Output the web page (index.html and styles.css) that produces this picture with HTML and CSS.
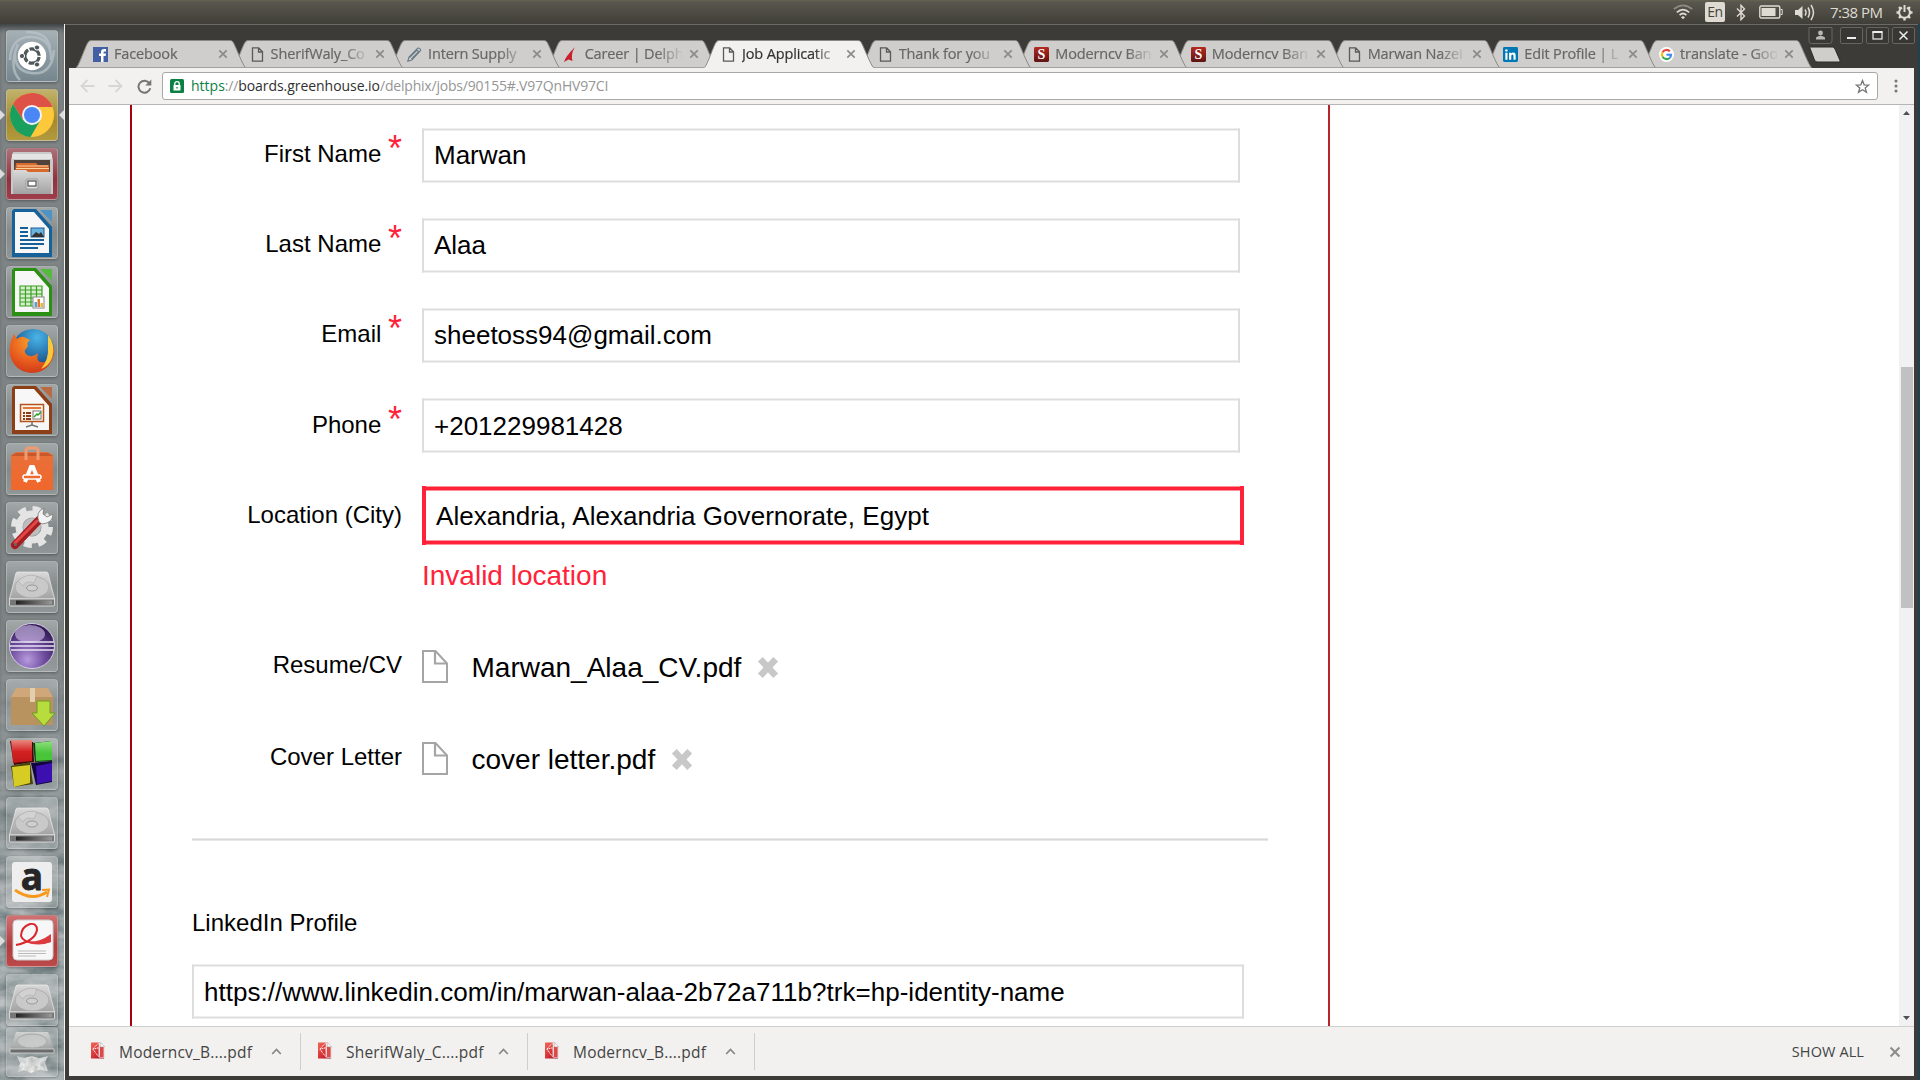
FILE: index.html
```html
<!DOCTYPE html>
<html lang="en">
<head>
<meta charset="utf-8">
<title>Job Application</title>
<link rel="stylesheet" href="styles.css">
</head>
<body>
<svg class="defs" width="0" height="0">
  <defs>
    <linearGradient id="metal" x1="0" y1="0" x2="0" y2="1"><stop offset="0" stop-color="#d9d9d9"/><stop offset="1" stop-color="#a2a2a2"/></linearGradient>
    <linearGradient id="shadeR" x1="0" y1="0" x2="0" y2="1"><stop offset="0" stop-color="#b52a22"/><stop offset="1" stop-color="#5e1412"/></linearGradient>
    <linearGradient id="dark" x1="0" y1="0" x2="1" y2="0"><stop offset="0" stop-color="#222"/><stop offset="1" stop-color="#999"/></linearGradient>
    <linearGradient id="orange" x1="0" y1="0" x2="0" y2="1"><stop offset="0" stop-color="#e8703a"/><stop offset="1" stop-color="#f0672b"/></linearGradient>
    <linearGradient id="cubeR" x1="0" y1="0" x2="0" y2="1"><stop offset="0" stop-color="#e88a80"/><stop offset=".5" stop-color="#d42222"/><stop offset="1" stop-color="#c01818"/></linearGradient>
    <linearGradient id="cubeG" x1="0" y1="0" x2="0" y2="1"><stop offset="0" stop-color="#8fe080"/><stop offset=".6" stop-color="#4ac53a"/></linearGradient>
    <radialGradient id="purple" cx=".4" cy=".8" r=".8"><stop offset="0" stop-color="#b79ade"/><stop offset=".5" stop-color="#6c4a9b"/><stop offset="1" stop-color="#2d1850"/></radialGradient>
    <radialGradient id="fox" cx=".5" cy=".2" r=".9"><stop offset="0" stop-color="#f7a12c"/><stop offset=".6" stop-color="#e6581d"/><stop offset="1" stop-color="#c73118"/></radialGradient>
    <radialGradient id="globe" cx=".6" cy=".2" r=".8"><stop offset="0" stop-color="#49b5e8"/><stop offset="1" stop-color="#0e3a78"/></radialGradient>
    <linearGradient id="pdfred" x1="0" y1="0" x2="1" y2="1"><stop offset="0" stop-color="#ef6a58"/><stop offset=".6" stop-color="#d42b33"/><stop offset="1" stop-color="#7c1033"/></linearGradient>
    <filter id="water" x="0" y="0" width="100%" height="100%">
      <feTurbulence type="fractalNoise" baseFrequency=".03 .07" numOctaves="4" seed="8"/>
      <feColorMatrix values=".8 0 0 0 -.03  .75 0 0 0 .04  .75 0 0 0 .05  0 0 0 0 1"/>
    </filter>
    <filter id="foam" x="0" y="0" width="100%" height="100%">
      <feTurbulence type="fractalNoise" baseFrequency=".25" numOctaves="2" seed="3" result="n"/>
      <feColorMatrix in="n" values=".8 0 0 0 .4  .8 0 0 0 .4  .8 0 0 0 .38  0 0 0 0 .85"/>
      <feComposite in2="SourceGraphic" operator="in"/>
    </filter>
    <symbol id="page" viewBox="0 0 12 15"><path d="M1 .8h6.2L11 4.8v9.4H1z M7 .8v4.2h4" fill="none" stroke="#5a5a5a" stroke-width="1.3"/></symbol>
    <symbol id="sicon" viewBox="0 0 16 16"><rect width="16" height="16" rx="1.5" fill="url(#shadeR)"/><text x="8" y="13.2" text-anchor="middle" font-family="Liberation Serif,serif" font-weight="bold" font-size="15" fill="#fff">S</text></symbol>
    <symbol id="x" viewBox="0 0 10 10"><path d="M1.3 1.3l7.4 7.4M8.7 1.3L1.3 8.7" stroke="#8b8b8b" stroke-width="1.7"/></symbol>
    <symbol id="tab" viewBox="0 0 170 28" preserveAspectRatio="none"><path d="M0 28C3 26 10 4 12.500 1.800Q13.500 .5 15.500 .5H154Q156 .5 157 2C160 7 167 26 170 28z"/><path class="edge" d="M.5 27.500C3.500 25 10 4 12.500 1.800Q13.500 .5 15.500 .5H154Q156 .5 157 2C160 7 166.500 25 169.500 27.500" fill="none"/></symbol>
    <symbol id="hdd" viewBox="0 0 52 52">
      <path d="M10 12Q10.500 11 12 11H40Q41.500 11 42 12L48.500 38H3.500z" fill="url(#metal)" stroke="#eee" stroke-width=".7"/>
      <ellipse cx="26" cy="26" rx="17" ry="11" fill="#c9c9c9" stroke="#a6a6a6" stroke-width=".8"/>
      <path d="M12 20Q20 12 31 15L28 22Q20 19 17 25Z" fill="#d2d2d2" stroke="#aaa" stroke-width=".6"/>
      <ellipse cx="26" cy="27" rx="5.500" ry="3" fill="#cfcfcf" stroke="#999"/>
      <path d="M3.500 38H48.500V44Q48.500 45 47 45H5Q3.500 45 3.500 44z" fill="#777" stroke="#e8e8e8" stroke-width=".8"/><path d="M10 39.500H46V43.500H10z" fill="url(#dark)"/>
    </symbol>
    <symbol id="pdf" viewBox="0 0 15 17"><path d="M0 0h10l4 4v13H0z" fill="url(#pdfred)"/><path d="M8 0h3l3.500 4v12.500H9z" fill="#e9dfdf"/><path d="M9.500 4.500h4V16h-4z" fill="#d94a49"/><path d="M7.500 1L2 7l6 8M2 7L8.500 5.500V15" fill="none" stroke="#fff" stroke-width="1" stroke-dasharray="1.500 .6"/><path d="M10.500 0L14.500 4.500h-4z" fill="#fff" stroke="#aaa" stroke-width=".5"/></symbol>
    <symbol id="chev" viewBox="0 0 11 7"><path d="M1.200 6L5.500 1.500 9.800 6" fill="none" stroke="#868686" stroke-width="1.700"/></symbol>
    <symbol id="file" viewBox="0 0 26 33"><path d="M1 1h12.500L25 13.500V32H1z" fill="#fff" stroke="#a5a5a5" stroke-width="2"/><path d="M13 1v12.500H25" fill="none" stroke="#a5a5a5" stroke-width="2.200"/></symbol>
    <symbol id="remove" viewBox="0 0 22 23"><path d="M3.300 3.300L18.700 19.700M18.700 3.300L3.300 19.700" stroke="#c8c8c8" stroke-width="6.600"/></symbol>
  </defs>
</svg>

<header class="panel">
  <svg class="wifi" width="20" height="16" viewBox="0 0 20 16" fill="none" stroke-width="1.700"><path d="M.8 5.200Q10-2.500 19.200 5.200" stroke="#8d8a82"/><path d="M3.800 8.300Q10 2.800 16.200 8.300M6.600 11Q10 8 13.400 11" stroke="#dfdbd2"/><path d="M8 13.200Q10 11.400 12 13.200L10 15.300z" fill="#dfdbd2"/></svg>
  <span class="lang">En</span>
  <svg class="bt" width="10" height="17" viewBox="0 0 10 17"><path d="M1 4.500L8.500 12 5 15.700V1.300L8.500 5 1 12.500" fill="none" stroke="#dfdbd2" stroke-width="1.400"/></svg>
  <svg class="batt" width="24" height="14" viewBox="0 0 24 14"><rect x=".8" y="1" width="20" height="12" rx="1.500" fill="none" stroke="#dfdbd2" stroke-width="1.400"/><path d="M2.500 3h14v8h-14z" fill="#dfdbd2"/><path d="M21.500 4.500h1.700v5h-1.700" fill="none" stroke="#dfdbd2"/></svg>
  <svg class="vol" width="21" height="17" viewBox="0 0 21 17"><path d="M0 6h3l4.500-4v13L3 11H0z" fill="#dfdbd2"/><path d="M10 5.500Q12 8.500 10 11.500M13 3.500Q16 8.500 13 13.500M16 1Q21 8.500 16 16" fill="none" stroke="#dfdbd2" stroke-width="1.500"/></svg>
  <span class="clock">7:38 PM</span>
  <svg class="gear" width="17" height="17" viewBox="0 0 17 17"><g fill="none" stroke="#dfdbd2"><path d="M6 3.600A5.400 5.400 0 1 0 11 3.600" stroke-width="2"/><path d="M8.500 1v7" stroke-width="2"/><path d="M3 3l1.800 1.800M14 3l-1.800 1.800M.5 8.500h2.500M14 8.500h2.500M3 14l1.800-1.800M14 14l-1.800-1.800M8.500 14v2.500" stroke-width="2.400"/></g></svg>
</header>

<div class="desktop">
<nav class="launcher">
  <svg class="sea" width="65" height="1056"><rect width="65" height="1056" filter="url(#water)"/></svg>
  <div class="tile dash"><svg viewBox="0 0 52 52"><path d="M4 30Q5 6 26 7Q46 8 45 30M48 20Q46 46 25 43Q8 41 9 22M14 50Q2 38 12 14M20 2Q42 2 44 18" fill="none" stroke="#b9c5ca" stroke-width="2.500" opacity=".7"/><circle cx="26" cy="26" r="14.200" fill="#fff"/><circle cx="26" cy="26" r="7.200" fill="none" stroke="#4e5759" stroke-width="3.200" stroke-dasharray="13.500 1.600" stroke-dashoffset="-1"/><g fill="#4e5759" stroke="#fff" stroke-width="1"><circle cx="16" cy="26" r="2.600"/><circle cx="31" cy="17.500" r="2.600"/><circle cx="31" cy="34.500" r="2.600"/></g></svg></div>
  <div class="tile chrome run focus"><svg viewBox="0 0 52 52"><circle cx="26" cy="26" r="22" fill="#fdc93a"/><path d="M7 15A22 22 0 0 1 46.500 18H26L17 31z" fill="#de5147"/><path d="M7 15A22 22 0 0 0 24.500 48L34.500 31 26 36 17 31z" fill="#19a05f"/><circle cx="26" cy="26" r="10" fill="#f3f3f3"/><circle cx="26" cy="26" r="8" fill="#4a86f5"/></svg></div>
  <div class="tile files run"><svg viewBox="0 0 52 52"><path d="M7 4H45L47 12V46H5V12z" fill="#c9c9c9"/><path d="M6 6H46V11H6z" fill="#e3e3e3"/><path d="M8 12H44V24H8z" fill="#51423b"/><path d="M10 15H30L32 17H43V24H9z" fill="#d86a2f"/><path d="M11 18H42M10 20.500H43" stroke="#f9d49c" stroke-width="1.200"/><path d="M7 22H20L22 24H45V46H7z" fill="url(#metal)"/><rect x="20" y="31" width="12" height="10" rx="2" fill="#dedede" stroke="#999"/><rect x="22" y="33" width="8" height="5" fill="#fff" stroke="#333"/></svg></div>
  <div class="tile"><svg viewBox="0 0 52 52"><path d="M8 2H30L46 20V50H6V4z" fill="#17619b"/><path d="M9 5H28L43 22V46H9z" fill="#f7f7f7"/><path d="M34 3H46V15z" fill="#4e93c4"/><path d="M14 21h8M14 25h8M14 29h8M14 33h24M14 37h24M14 41h18" stroke="#175f98" stroke-width="1.800"/><rect x="25" y="21" width="13" height="9" fill="#69b3de" stroke="#175f98"/><path d="M25 30l5-5 3 2 2-2 3 5" fill="#333"/></svg></div>
  <div class="tile"><svg viewBox="0 0 52 52"><path d="M8 2H30L46 20V50H6V4z" fill="#2b8f13"/><path d="M9 5H28L43 22V46H9z" fill="#f7f7f7"/><path d="M34 3H46V15z" fill="#56b83f"/><path d="M14 20h22v20H14z" fill="#d7efcf"/><path d="M14 20h22v20H14zM14 24h22M14 28h22M14 32h22M14 36h22M19.500 20v20M25 20v20M30.500 20v20" fill="none" stroke="#3ba022" stroke-width="1.200"/><rect x="27" y="31" width="11" height="11" fill="#fff" stroke="#888"/><path d="M28.500 36h2.500v5h-2.500z" fill="#4aa4e0"/><path d="M31.500 33h2.500v8h-2.500z" fill="#e5762b"/><path d="M34.500 37h2.500v4h-2.500z" fill="#edb62d"/></svg></div>
  <div class="tile"><svg viewBox="0 0 52 52"><circle cx="27" cy="25" r="21" fill="url(#globe)"/><path d="M5 16L8 9 11 14Q14 11 18 12L24 15Q20 18 22 21L20 24Q17 26 21 30Q27 33 32 28Q29 39 39 37Q46 30 44 14Q51 25 46 35Q40 48 25 48Q8 46 4 30Q3 22 5 16z" fill="url(#fox)"/><path d="M42 10Q50 20 46 33Q43 41 35 44Q43 34 42 22z" fill="#f9c83b"/></svg></div>
  <div class="tile"><svg viewBox="0 0 52 52"><path d="M8 2H30L46 20V50H6V4z" fill="#8c3e16"/><path d="M9 5H28L43 22V46H9z" fill="#f7f7f7"/><path d="M34 3H46V15z" fill="#b86b44"/><rect x="14.500" y="20.500" width="23" height="17" fill="#fdf3ea" stroke="#b3541d" stroke-width="1.500"/><path d="M17 24h18" stroke="#e07a3a" stroke-width="2"/><path d="M17 29h8M17 32h8M17 35h8" stroke="#8c3e16" stroke-width="1.800" stroke-dasharray="2 1 5"/><rect x="27" y="27" width="8" height="8" fill="#fff" stroke="#777"/><path d="M28 33l3-3 1 1 3-3" fill="none" stroke="#2ca02c" stroke-width="1.500"/><path d="M26 38v3l-6 2M26 41l6 2" stroke="#777" stroke-width="1.600" fill="none"/></svg></div>
  <div class="tile"><svg viewBox="0 0 52 52"><path d="M5 12L10 9H42L47 12V47H5z" fill="url(#orange)"/><path d="M5 13L10 10H42L47 13z" fill="#c65a2d"/><path d="M20 17V8Q20 5 23 5H29Q32 5 32 8V17" fill="none" stroke="#f09a70" stroke-width="3"/><path d="M19 39L25 24H27L33 39" fill="none" stroke="#fff" stroke-width="4"/><rect x="17" y="32" width="18" height="4" rx="2" fill="#ee6a30" stroke="#fff" stroke-width="1.500"/></svg></div>
  <div class="tile"><svg viewBox="0 0 52 52"><circle cx="26" cy="25" r="18.500" fill="none" stroke="#e4e4e4" stroke-width="5" stroke-dasharray="8 6.530"/><circle cx="26" cy="25" r="13" fill="none" stroke="#e4e4e4" stroke-width="7"/><circle cx="26" cy="25" r="9" fill="#bdbdbd"/><path d="M9 43L33 18" stroke="#a51d20" stroke-width="8" stroke-linecap="round"/><path d="M9 41L31 19" stroke="#e04848" stroke-width="3" stroke-linecap="round"/><path d="M33 20Q29 10 38 6L37 12 41 15 47 12Q47 21 36 22z" fill="#f3f3f3" stroke="#777" stroke-width=".8"/><circle cx="9.500" cy="42.500" r="1.500" fill="#666"/></svg></div>
  <div class="tile"><svg><use href="#hdd"/></svg></div>
  <div class="tile"><svg viewBox="0 0 52 52"><circle cx="26" cy="26" r="22.500" fill="url(#purple)" stroke="#d8cbe8"/><ellipse cx="24" cy="14" rx="15" ry="9" fill="#c9b8e2" opacity=".65"/><path d="M5 22H48M4 26H48M5 30H48" stroke="#e9e2f3" stroke-width="1.400"/></svg></div>
  <div class="tile"><svg viewBox="0 0 52 52"><path d="M10 9H42L47 18H5z" fill="#d0a778"/><path d="M5 18H47V46H5z" fill="#b8925f"/><path d="M24 9h5v14h-5z" fill="#e3cfae"/><path d="M31 22H44V34H49L38 47 26 34H31z" fill="#b7dc3d" stroke="#6f9f1e"/></svg></div>
  <div class="tile"><svg viewBox="0 0 52 52"><path d="M4 3L27 4 28 24 8 27z" fill="#400808"/><path d="M27 5L46 3 46 23 29 24z" fill="#0e3d0a"/><path d="M5 28L24 24 27 46 8 49z" fill="#4a460a"/><path d="M25 25L46 23V44L30 47z" fill="#12043c"/><path d="M5 2H26V23L7 25z" fill="url(#cubeR)"/><path d="M29 5L46 3V22L30 23z" fill="url(#cubeG)"/><path d="M6 29L24 27V45L8 49z" fill="#d6cc23"/><path d="M30 28L46 25V43L31 46z" fill="#3b0fb0"/></svg></div>
  <div class="tile"><svg><use href="#hdd"/></svg></div>
  <div class="tile"><svg viewBox="0 0 52 52"><rect x="6" y="6" width="40" height="40" rx="3" fill="#eee"/><text x="26" y="33.500" text-anchor="middle" font-family="Open Sans,sans-serif" font-weight="bold" font-size="37" fill="#262626" stroke="#262626" stroke-width=".8">a</text><path d="M9 34Q26 46 41 36" fill="none" stroke="#f79a1c" stroke-width="2.800"/><path d="M36 34L43 33.500 41 41" fill="none" stroke="#f79a1c" stroke-width="2"/></svg></div>
  <div class="tile reader run"><svg viewBox="0 0 52 52"><rect x="7" y="5" width="40" height="40" rx="4" fill="#f7f7f7" stroke="#ccc"/><path d="M10 30Q29 26 31 15Q31 8 24 9Q15 12 15 21Q18 31 45 26" fill="none" stroke="#d8262c" stroke-width="2"/><path d="M20 27Q33 28 45 19V27Q32 32 20 27" fill="#dc3a3e"/><path d="M12 36h28M12 38.500h28M12 41h18" stroke="#bbb"/></svg></div>
  <div class="tile"><svg><use href="#hdd"/></svg></div>
  <div class="tile folded"><svg viewBox="0 0 52 50"><path d="M10 5H42L48 22H4z" fill="url(#metal)"/><ellipse cx="26" cy="14" rx="15" ry="7" fill="#ccc" stroke="#aaa"/><path d="M4 22H48V26H4z" fill="#666" stroke="#ddd" stroke-width=".8"/><path d="M11 29L18 31 26 29 33 31 42 29 39 36 42 44 33 43 25 46 18 43 12 45 14 36z" fill="#fff" filter="url(#foam)"/></svg></div>
</nav>

<main class="window">
  <div class="titlebar">
    <div class="tabs">
      <div class="tab"><svg class="shape"><use href="#tab"/></svg><svg class="fav" viewBox="0 0 15 15"><rect width="15" height="15" fill="#4460a5"/><path d="M8 15V9H6V6.500H8V5Q8 2 11 2H13V4.500H11.500Q10.500 4.500 10.500 5.500V6.500H13L12.600 9H10.500V15z" fill="#fff"/></svg><span>Facebook</span><svg class="close"><use href="#x"/></svg></div>
      <div class="tab"><svg class="shape"><use href="#tab"/></svg><svg class="fav"><use href="#page"/></svg><span>SherifWaly_Co</span><svg class="close"><use href="#x"/></svg></div>
      <div class="tab"><svg class="shape"><use href="#tab"/></svg><svg class="fav" viewBox="0 0 15 15"><path d="M.8 14.200L2 10 10.500 1.300Q11.500.5 12.800 1.700 14.200 3 13.300 4L4.800 12.900zM2.500 10.500L9.500 3.500M4.500 12L11.500 5M9.300 2.500l3.200 3" fill="none" stroke="#667a86" stroke-width="1.100"/></svg><span>Intern Supply</span><svg class="close"><use href="#x"/></svg></div>
      <div class="tab"><svg class="shape"><use href="#tab"/></svg><svg class="fav" viewBox="0 0 15 15"><path d="M11 0Q6.500 7 8.500 14L4.500 12.500 0 15Q1.500 9.500 11 0z" fill="#c8202c"/></svg><span>Career | Delph</span><svg class="close"><use href="#x"/></svg></div>
      <div class="tab active"><svg class="shape"><use href="#tab"/></svg><svg class="fav"><use href="#page"/></svg><span>Job Applicatic</span><svg class="close"><use href="#x"/></svg></div>
      <div class="tab"><svg class="shape"><use href="#tab"/></svg><svg class="fav"><use href="#page"/></svg><span>Thank for you</span><svg class="close"><use href="#x"/></svg></div>
      <div class="tab"><svg class="shape"><use href="#tab"/></svg><svg class="fav"><use href="#sicon"/></svg><span>Moderncv Ban</span><svg class="close"><use href="#x"/></svg></div>
      <div class="tab"><svg class="shape"><use href="#tab"/></svg><svg class="fav"><use href="#sicon"/></svg><span>Moderncv Ban</span><svg class="close"><use href="#x"/></svg></div>
      <div class="tab"><svg class="shape"><use href="#tab"/></svg><svg class="fav"><use href="#page"/></svg><span>Marwan Nazei</span><svg class="close"><use href="#x"/></svg></div>
      <div class="tab"><svg class="shape"><use href="#tab"/></svg><svg class="fav" viewBox="0 0 16 16"><rect width="16" height="16" rx="1.500" fill="#0077b5"/><path d="M2.500 6h2.300v7.500H2.500zM6.500 6h2.200v1Q9.500 5.800 11 5.800 13.500 5.800 13.500 9v4.500h-2.300V9.500Q11.200 7.900 10 7.900 8.800 7.900 8.800 9.500v4H6.500z" fill="#fff"/><circle cx="3.600" cy="3.600" r="1.300" fill="#fff"/></svg><span>Edit Profile | L</span><svg class="close"><use href="#x"/></svg></div>
      <div class="tab"><svg class="shape"><use href="#tab"/></svg><svg class="fav" viewBox="0 0 16 16"><circle cx="8" cy="8" r="8" fill="#fff"/><g fill="none" stroke-width="2.200"><path d="M3.800 5.500A4.900 4.900 0 0 1 11.600 4.600" stroke="#ea4335"/><path d="M3.800 5.500A4.900 4.900 0 0 0 3.800 10.500" stroke="#fbbc05"/><path d="M3.800 10.500A4.900 4.900 0 0 0 11.400 11.600" stroke="#34a853"/><path d="M8 8.200H12.900Q12.800 10.300 11.400 11.600" stroke="#4285f4"/></g></svg><span>translate - Goo</span><svg class="close"><use href="#x"/></svg></div>
    </div>
    <svg class="newtab" width="34" height="17" viewBox="0 0 34 17"><path d="M1.500 1H24.500Q26 1 27 3L32 14.500Q32.300 16 31 16H9Q7.500 16 6.500 14z" fill="#d0cecb" stroke="#2d2c29" stroke-width="1"/></svg>
    <div class="controls">
      <svg class="user" viewBox="0 0 24 17"><path d="M.5 .5H23.500V14Q23.500 16.500 21 16.500H3Q.5 16.500 .5 14z" fill="#3a3935" stroke="#6b6963"/><circle cx="12" cy="6" r="2.400" fill="#bab8b3"/><path d="M7.500 12.500V10.500Q12 7 16.500 10.500V12.500z" fill="#bab8b3"/></svg>
      <svg viewBox="0 0 23 17"><rect x=".5" y=".5" width="22" height="16" rx="1.500" fill="#383733" stroke="#66645e"/><path d="M7 11h9" stroke="#eee" stroke-width="2"/></svg>
      <svg viewBox="0 0 23 17"><rect x=".5" y=".5" width="22" height="16" rx="1.500" fill="#383733" stroke="#66645e"/><rect x="7" y="5" width="9" height="7" fill="none" stroke="#eee" stroke-width="1.200"/><path d="M6.500 5h10" stroke="#eee" stroke-width="2"/></svg>
      <svg viewBox="0 0 23 17"><rect x=".5" y=".5" width="22" height="16" rx="1.500" fill="#383733" stroke="#66645e"/><path d="M7.500 4.500l8 8M15.500 4.500l-8 8" stroke="#eee" stroke-width="1.500"/></svg>
    </div>
  </div>

  <div class="toolbar">
    <svg class="arrow" viewBox="0 0 15 14"><path d="M14.500 7H1.500M7.500 1L1.500 7l6 6" fill="none" stroke="#d8d6d3" stroke-width="1.800"/></svg>
    <svg class="arrow" viewBox="0 0 15 14"><path d="M.5 7H13.500M7.500 1L13.500 7l-6 6" fill="none" stroke="#d8d6d3" stroke-width="1.800"/></svg>
    <svg class="reload" viewBox="0 0 15 15"><path d="M12.500 4.300A6 6 0 1 0 13.300 9.300" fill="none" stroke="#757575" stroke-width="2"/><path d="M14.300 .5V6.500H8.300z" fill="#757575"/></svg>
    <div class="omnibox">
      <svg class="lock" viewBox="0 0 14 14"><rect width="14" height="14" rx="1.500" fill="#0b8043"/><rect x="3.500" y="6" width="7" height="5.500" fill="#fff"/><path d="M4.800 6V4.500Q4.800 2.700 7 2.700T9.200 4.500V6" fill="none" stroke="#fff" stroke-width="1.300"/><path d="M6.400 8h1.300v1.600H6.400z" fill="#0b8043"/></svg>
      <span class="url"><b>https</b>://<i>boards.greenhouse.io</i>/delphix/jobs/90155#.V97QnHV97CI</span>
      <svg class="star" viewBox="0 0 15 15"><path d="M7.500 1.500L9.200 5.800 13.800 6 10.200 8.900 11.500 13.300 7.500 10.800 3.500 13.300 4.800 8.900 1.200 6 5.800 5.800z" fill="none" stroke="#757575" stroke-width="1.300"/></svg>
    </div>
    <svg class="dots" viewBox="0 0 4 14"><g fill="#757575"><circle cx="2" cy="2" r="1.500"/><circle cx="2" cy="7" r="1.500"/><circle cx="2" cy="12" r="1.500"/></g></svg>
  </div>

  <div class="viewport">
    <section class="page">
      <div class="field"><label>First Name <em>*</em></label><div class="input">Marwan</div></div>
      <div class="field"><label>Last Name <em>*</em></label><div class="input">Alaa</div></div>
      <div class="field"><label>Email <em>*</em></label><div class="input">sheetoss94@gmail.com</div></div>
      <div class="field phone"><label>Phone <em>*</em></label><div class="input">+201229981428</div></div>
      <div class="field location"><label>Location (City)</label><div class="input invalid">Alexandria, Alexandria Governorate, Egypt</div></div>
      <p class="error">Invalid location</p>
      <div class="upload"><label>Resume/CV</label><svg class="doc"><use href="#file"/></svg><span>Marwan_Alaa_CV.pdf</span><svg class="remove"><use href="#remove"/></svg></div>
      <div class="upload"><label>Cover Letter</label><svg class="doc"><use href="#file"/></svg><span>cover letter.pdf</span><svg class="remove"><use href="#remove"/></svg></div>
      <hr>
      <label class="wide-label">LinkedIn Profile</label>
      <div class="input wide">https://www.linkedin.com/in/marwan-alaa-2b72a711b?trk=hp-identity-name</div>
    </section>
    <div class="scrollbar">
      <svg viewBox="0 0 7 4"><path d="M0 4L3.500 0 7 4z" fill="#505050"/></svg>
      <div class="thumb"></div>
      <svg class="down" viewBox="0 0 7 4"><path d="M0 0L3.500 4 7 0z" fill="#505050"/></svg>
    </div>
  </div>

  <footer class="shelf">
    <div class="download"><svg class="pdf"><use href="#pdf"/></svg><span>Moderncv_B....pdf</span><svg class="chev"><use href="#chev"/></svg></div>
    <div class="download"><svg class="pdf"><use href="#pdf"/></svg><span>SherifWaly_C....pdf</span><svg class="chev"><use href="#chev"/></svg></div>
    <div class="download"><svg class="pdf"><use href="#pdf"/></svg><span>Moderncv_B....pdf</span><svg class="chev"><use href="#chev"/></svg></div>
    <span class="showall">SHOW ALL</span>
    <svg class="dismiss"><use href="#x"/></svg>
  </footer>
</main>
</div>
</body>
</html>
```
FILE: styles.css
```css
* { box-sizing: border-box; }
body { margin: 0; width: 1920px; height: 1080px; overflow: hidden; background: #3c3b37; font-family: "Liberation Sans", Arial, sans-serif; }
svg { display: block; flex: none; }
.defs { position: absolute; }

.panel { height: 24px; display: flex; align-items: center; justify-content: flex-end; padding-right: 7px; background: linear-gradient(#656252 0, #59574e 2px, #3f3e38 24px); font-family: "Open Sans", "Noto Sans", sans-serif; color: #dfdbd2; }
.lang { width: 20px; height: 20px; margin: 0 11px 0 12px; border-radius: 2px; background: #dfdbd2; color: #44433d; font-size: 14px; line-height: 20px; letter-spacing: -.5px; text-align: center; }
.batt { margin-left: 13px; }
.vol { margin: 0 14px 0 12px; }
.clock { width: 54px; font-size: 15px; letter-spacing: -.5px; line-height: 22px; white-space: nowrap; }
.gear { margin-left: 12px; }

.desktop { display: flex; height: 1056px; }
.launcher { position: relative; width: 65px; height: 1056px; padding: 6px 0 0 6px; display: flex; flex-direction: column; gap: 7px; background: #7f8586; border-right: 1px solid #f2f2f2; overflow: hidden; box-shadow: inset 0 7px 6px -3px #3b3f41; }
.sea { position: absolute; left: 0; top: 0; opacity: .85; -webkit-mask-image: linear-gradient(transparent 600px, #0008 760px, #000 900px); mask-image: linear-gradient(transparent 600px, #0008 760px, #000 900px); }
.tile { position: relative; flex: none; width: 52px; height: 52px; border-radius: 4px; border: 1px solid rgba(205, 210, 210, .42); background: linear-gradient(rgba(205, 210, 210, .45), rgba(150, 155, 155, .2) 50%, rgba(185, 190, 190, .3)); box-shadow: 0 1px 3px rgba(30, 30, 30, .45); }
.tile svg { width: 52px; height: 52px; margin: -1px; }
.dash { background: linear-gradient(#a5b0b5, #75868e); }
.chrome { background: linear-gradient(#c2b26d, #a58a2c 60%, #b39a3f); }
.files { background: linear-gradient(#ad7078, #8b3440 60%, #a03d4a); }
.reader { background: linear-gradient(#cf7273, #b03c3e 60%, #bb4a4b); }
.run::before { content: ""; position: absolute; left: -7px; top: 20px; border: 5px solid transparent; border-left-color: #dcdcdc; border-right: 0; }
.focus::after { content: ""; position: absolute; right: -7px; top: 20px; border: 5px solid transparent; border-right-color: #dcdcdc; border-left: 0; }
.folded { height: 50px; margin-top: -6px; opacity: .9; }
.folded svg { height: 50px; }

.window { width: 1853px; height: 1056px; display: flex; flex-direction: column; padding: 0 4px 4px; border-top: 1px solid #6c6a65; background: #3c3b37; box-shadow: 2px 0 #1f4250; }
.titlebar { position: relative; display: flex; height: 43px; padding: 15px 0 0 7px; font-family: "Open Sans", "Noto Sans", sans-serif; }
.tabs { display: flex; width: 1734px; flex: none; }
.tab { position: relative; display: flex; align-items: center; flex: none; width: 170px; height: 28px; margin-right: -13.4px; padding: 0 0 0 17px; color: #666; fill: #d0cecc; stroke: none; }
.tab:nth-child(1) { z-index: 11; } .tab:nth-child(2) { z-index: 10; } .tab:nth-child(3) { z-index: 9; } .tab:nth-child(4) { z-index: 8; }
.tab:nth-child(5) { z-index: 12; } .tab:nth-child(6) { z-index: 6; } .tab:nth-child(7) { z-index: 5; } .tab:nth-child(8) { z-index: 4; }
.tab:nth-child(9) { z-index: 3; } .tab:nth-child(10) { z-index: 2; } .tab:nth-child(11) { z-index: 1; }
.tab:nth-child(3), .tab:nth-child(5) { margin-left: .8px; }
.tab:nth-child(9), .tab:nth-child(11) { margin-left: -.8px; }
.tab.active { color: #333; fill: #f2f1ef; }
.shape { position: absolute; left: 0; top: 0; width: 170px; height: 28px; stroke: none; z-index: -1; }
.edge { stroke: #8a8884; stroke-width: 1; }
.active .edge { stroke: #b5b3b0; }
.tab:not(.active)::before { content: ""; position: absolute; left: 1px; right: 1px; bottom: 0; height: 1px; background: #a3a19e; }
.fav { width: 15px; height: 15px; margin-right: 6px; }
.tab span { width: 97px; height: 24px; line-height: 23px; font-size: 14.5px; letter-spacing: -.15px; -webkit-text-stroke: .2px; white-space: nowrap; -webkit-mask-image: linear-gradient(90deg, #000 72px, transparent 99px); mask-image: linear-gradient(90deg, #000 72px, transparent 99px); }
.close { width: 10px; height: 10px; margin-left: 7px; }
.newtab { margin: 6px 0 0 -2px; }
.controls { position: absolute; right: -1px; top: 2px; display: flex; gap: 3px; }
.controls svg { width: 23px; height: 17px; }
.controls .user { width: 25px; height: 17px; margin-right: 4px; }

.toolbar { height: 37px; flex: none; display: flex; align-items: center; background: #f2f1ef; border-bottom: 1px solid #b6b4b6; padding-left: 11px; }
.arrow { width: 15px; height: 14px; margin-right: 13px; }
.reload { width: 15px; height: 15px; margin: 0 10px 0 1px; }
.omnibox { width: 1716px; height: 28px; display: flex; align-items: center; padding: 0 7px; background: #fff; border: 1px solid #a9a8a7; border-radius: 3px; font-family: "Open Sans", "Noto Sans", sans-serif; }
.lock { width: 14px; height: 14px; margin-right: 7px; }
.url { flex: 1; font-size: 14px; line-height: 26px; letter-spacing: -.2px; color: #969696; white-space: nowrap; }
.url b { font-weight: 400; color: #0b8043; letter-spacing: 0; }
.url i { font-style: normal; color: #303030; letter-spacing: -.05px; }
.star { width: 15px; height: 15px; }
.dots { width: 4px; height: 14px; margin-left: 16px; }

.viewport { height: 921px; flex: none; display: flex; background: #fff; overflow: hidden; }
.page { width: 1200px; margin-left: 61px; margin-right: auto; height: 921px; padding: 23px 60px 0; border-left: 2px solid #a9000f; border-right: 2px solid #b5252a; }
.field { display: flex; height: 90px; }
.field label, .upload label { width: 210px; margin-right: 20px; text-align: right; font-size: 24px; line-height: 28px; white-space: nowrap; }
.field label { padding-top: 12px; }
.field em { display: inline-block; margin-top: -9px; height: 28px; font-style: normal; font-size: 36px; line-height: 36px; color: #ff2238; vertical-align: top; }
.input { width: 818px; height: 55px; padding: 0 10px; border: 1px solid #eee; border-left: 2px solid #ddd; border-right: 2px solid #ddd; box-shadow: inset 0 1px #ddd, inset 0 -1px #ddd, inset 0 2px #eee, inset 0 -2px #eee; font-size: 26px; line-height: 53px; white-space: nowrap; }
.field.phone { height: 88px; }
.field.phone label { padding-top: 13px; }
.field.phone .input { line-height: 55px; }
.field.location { height: 59px; }
.field.location label { padding-top: 15px; }
.invalid { width: 822px; height: 59px; border: 0; border-left: 4px solid #ff2238; border-right: 4px solid #ff2238; box-shadow: inset 0 1px #ff919b, inset 0 -1px #ff919b, inset 0 4px #ff2238, inset 0 -4px #ff2238, inset 0 5px #ff919b, inset 0 -5px #ff919b; line-height: 60px; letter-spacing: .04px; }
.error { margin: 15px 0 0 230px; height: 32px; line-height: 32px; font-size: 28px; color: #ff2238; }
.upload { display: flex; align-items: center; height: 92px; font-size: 28px; line-height: 32px; }
.error + .upload { margin-top: 30px; }
.upload label { margin-top: -7px; }
.upload span { margin-left: -.5px; }
.doc { width: 26px; height: 33px; margin-right: 24px; margin-top: -3px; }
.remove { width: 22px; height: 23px; margin-left: 16px; margin-top: -1px; }
hr { width: 1076px; height: 3px; margin: 32px 0 0; border: 0; background: linear-gradient(#e8e8e8 1px, #d8d8d8 1px 2px, #e8e8e8 2px); }
.wide-label { display: block; margin-top: 68px; height: 28px; font-size: 24px; line-height: 28px; }
.input.wide { width: 1052px; margin-top: 27px; line-height: 54px; letter-spacing: .03px; }
.scrollbar { width: 15px; height: 921px; padding-top: 6px; display: flex; flex-direction: column; align-items: center; background: #f1f1f1; }
.scrollbar svg { width: 7px; height: 4px; }
.thumb { width: 12px; height: 241px; margin-top: 252px; background: #c1c1c1; }
.scrollbar .down { margin: auto 0 6px; }

.shelf { flex: none; height: 50px; display: flex; align-items: center; background: #f2f1ef; border-top: 1px solid #cfcfcf; font-family: "Open Sans", "Noto Sans", sans-serif; color: #444; }
.download { width: 227px; height: 37px; display: flex; align-items: center; padding-left: 17px; border-right: 1px solid #cfcecb; font-size: 15.5px; letter-spacing: .2px; white-space: nowrap; }
.download:first-child { width: 232px; padding-left: 22px; }
.pdf { width: 14px; height: 17px; margin-right: 14px; margin-top: -2px; }
.chev { width: 11px; height: 7px; margin-left: auto; margin-right: 18px; }
.showall { margin-left: auto; margin-right: 25px; font-size: 14.5px; letter-spacing: .1px; }
.dismiss { width: 12px; height: 12px; margin-right: 13px; }
```
